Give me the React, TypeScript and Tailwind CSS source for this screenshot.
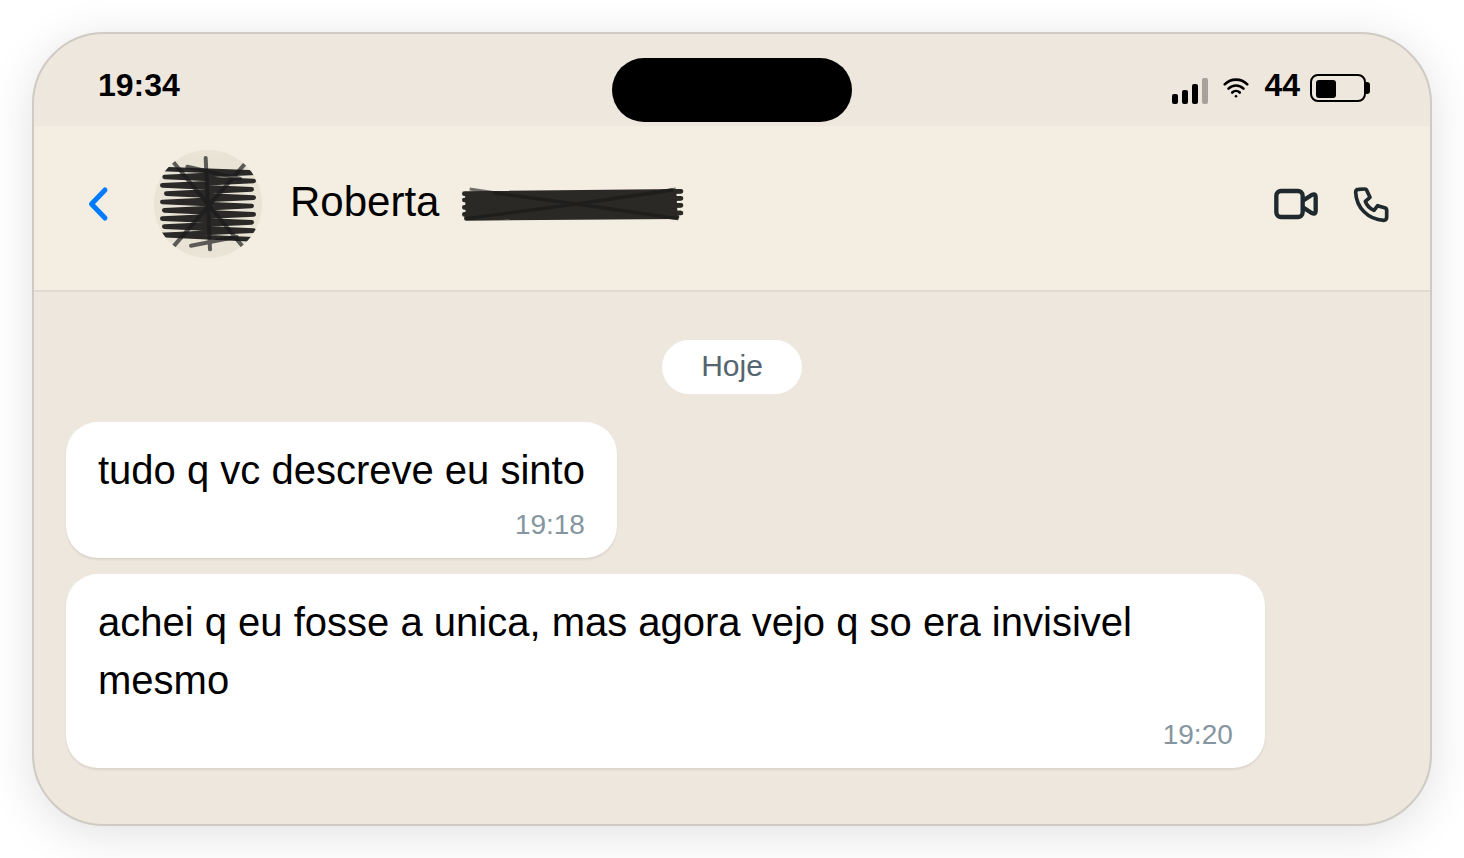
type Message = { text: string; time: string };

const messages: Message[] = [
  { text: "tudo q vc descreve eu sinto", time: "19:18" },
  { text: "achei q eu fosse a unica, mas agora vejo q so era invisivel mesmo", time: "19:20" },
];

function SignalIcon() {
  return (
    <svg width="36" height="32" viewBox="0 0 36 32" aria-hidden="true">
      <rect x="0" y="22" width="6" height="10" rx="2" />
      <rect x="10" y="18" width="6" height="14" rx="2" />
      <rect x="20" y="12" width="6" height="20" rx="2" />
      <rect x="30" y="6" width="6" height="26" rx="2" fill="#a6a19b" />
    </svg>
  );
}

function WifiIcon() {
  return (
    <svg width="28" height="28" viewBox="0 0 28 28" fill="none" stroke="#000" strokeWidth="2.6" strokeLinecap="round" aria-hidden="true">
      <path d="M2.7 10.4C9 4 19 4 25.3 10.4" />
      <path d="M6.5 14.6C10.7 10.4 17.3 10.4 21.5 14.6" />
      <path d="M10.2 18.5C12.4 16.4 15.6 16.4 17.8 18.5" />
      <circle cx="14" cy="22.2" r="1.3" fill="#000" stroke="none" />
    </svg>
  );
}

function BatteryIcon() {
  return (
    <svg width="60" height="28" viewBox="0 0 60 28" aria-hidden="true">
      <rect x="1" y="1" width="54" height="26" rx="7" fill="none" stroke="#000" strokeWidth="2" />
      <rect x="6" y="6" width="20" height="18" rx="3" />
      <path d="M56 8h1a3 3 0 0 1 3 3v6a3 3 0 0 1-3 3h-1z" />
    </svg>
  );
}

function AvatarScribble() {
  return (
    <svg width="108" height="108" viewBox="42 30 324 324" fill="none" stroke="#1a1a1a" className="shrink-0" aria-hidden="true">
      <clipPath id="avatar-clip">
        <circle cx="204" cy="192" r="162" />
      </clipPath>
      <circle cx="204" cy="192" r="162" fill="#e9e4d5" stroke="none" />
      <g clipPath="url(#avatar-clip)">
        <path
          d="M66 87L350 98L74 111L341 123L67 136L335 148L79 161L341 173L67 186L335 198L73 211L341 223L67 236L335 247L73 260L341 272L60 285L340 298"
          strokeWidth="14"
          strokeLinecap="round"
          strokeLinejoin="round"
          opacity="0.92"
        />
        <g strokeWidth="12" opacity="0.68">
          <path d="M98 64L310 322" />
          <path d="M318 68L98 322" />
          <path d="M197 54L210 328" strokeLinecap="round" />
          <path d="M142 80L300 116" strokeLinecap="round" />
          <path d="M153 317L290 290" strokeLinecap="round" />
        </g>
      </g>
    </svg>
  );
}

function NameScribble() {
  return (
    <svg width="224" height="36" viewBox="34 48 672 108" fill="none" aria-hidden="true">
      <path d="M60 57L200 78M686 146L560 130M678 57L560 76" stroke="#1a1a1a" strokeWidth="9" opacity="0.6" />
      <path d="M46 66L680 62L684 142L48 148Z" fill="#2b2926" />
      <path
        d="M44 71L694 64L44 90L694 85L44 112L694 106L44 133L694 129L50 145L682 140"
        stroke="#2b2926"
        strokeWidth="14"
        strokeLinecap="round"
        strokeLinejoin="round"
      />
      <path d="M130 68L380 102L686 146M50 146L380 102L670 60" stroke="#1a1a1a" strokeWidth="10" opacity="0.7" />
    </svg>
  );
}

function VideoIcon() {
  return (
    <svg width="44" height="44" viewBox="42 36 132 132" fill="none" stroke="#1f2a2e" strokeWidth="13" strokeLinejoin="round" aria-hidden="true">
      <rect x="49" y="63" width="79" height="78" rx="14" />
      <path d="M130 91L155 75Q167 70 167 80V124Q167 134 155 129L130 113" />
    </svg>
  );
}

function PhoneIcon() {
  return (
    <svg width="40" height="40" viewBox="270 42 120 120" fill="none" stroke="#1f2a2e" strokeWidth="11" strokeLinejoin="round" aria-hidden="true">
      <path d="M296 58L314 57Q319 57 320 61L330 82L316 94C320 106 329 115 342 121L353 107L376 114Q380 116 380 120V141Q380 151 371 151C324 148 289 113 287 67Q287 58 296 58Z" />
    </svg>
  );
}

function StatusBar() {
  return (
    <div className="grid grid-cols-[1fr_auto_1fr] items-center px-[60px] pt-6 pb-1 text-[32px] leading-9 font-bold">
      <time className="pb-[10px] pl-1">19:34</time>
      <div className="h-16 w-60 rounded-full bg-black" />
      <div className="flex items-center justify-end gap-[14px] pb-1">
        <SignalIcon />
        <WifiIcon />
        <div className="flex items-center gap-[10px]">
          <span className="pb-[6px]">44</span>
          <BatteryIcon />
        </div>
      </div>
    </div>
  );
}

function ChatHeader() {
  return (
    <header className="flex items-center border-b-2 border-[#e1dad2] bg-[#f4ede1] pt-6 pr-10 pb-8 pl-12">
      <button type="button" aria-label="Voltar" className="mr-10">
        <svg width="32" height="44" viewBox="0 0 32 44" fill="none" stroke="#007aff" strokeWidth="5" strokeLinecap="round" strokeLinejoin="round" aria-hidden="true">
          <path d="M23 8L9.5 22L23 36" />
        </svg>
      </button>
      <AvatarScribble />
      <h1 className="ml-7 pb-1 text-[42px] leading-[50px]">Roberta</h1>
      <div className="ml-[22px]">
        <NameScribble />
      </div>
      <div className="ml-auto flex items-center gap-8">
        <button type="button" aria-label="Chamada de vídeo">
          <VideoIcon />
        </button>
        <button type="button" aria-label="Chamada de voz">
          <PhoneIcon />
        </button>
      </div>
    </header>
  );
}

function Bubble({ text, time }: Message) {
  return (
    <li className="flex max-w-[90%] flex-col rounded-[32px] bg-white px-8 pt-[19px] pb-[17px] shadow-[0_2px_2px_rgba(0,0,0,0.08)]">
      <p className="text-[40px] leading-[58px]">{text}</p>
      <time className="mt-[10px] self-end text-[28px] leading-8 text-[#8696a0]">{time}</time>
    </li>
  );
}

export default function App() {
  return (
    <div className="min-h-screen bg-white p-8 font-['Liberation_Sans',Arial,sans-serif] text-black">
      <div className="overflow-hidden rounded-[72px] border-2 border-[#cfcac3] bg-[#eee7de] shadow-[0_8px_48px_rgba(0,0,0,0.12)]">
        <StatusBar />
        <ChatHeader />
        <main className="flex flex-col items-center px-8 pt-12 pb-14">
          <div className="rounded-full bg-white px-[39px] pt-[7px] pb-[9px] text-[30px] leading-[38px] text-[#54656f]">Hoje</div>
          <ul className="mt-7 flex w-full flex-col items-start gap-4">
            {messages.map((message) => (
              <Bubble key={message.time} {...message} />
            ))}
          </ul>
        </main>
      </div>
    </div>
  );
}
